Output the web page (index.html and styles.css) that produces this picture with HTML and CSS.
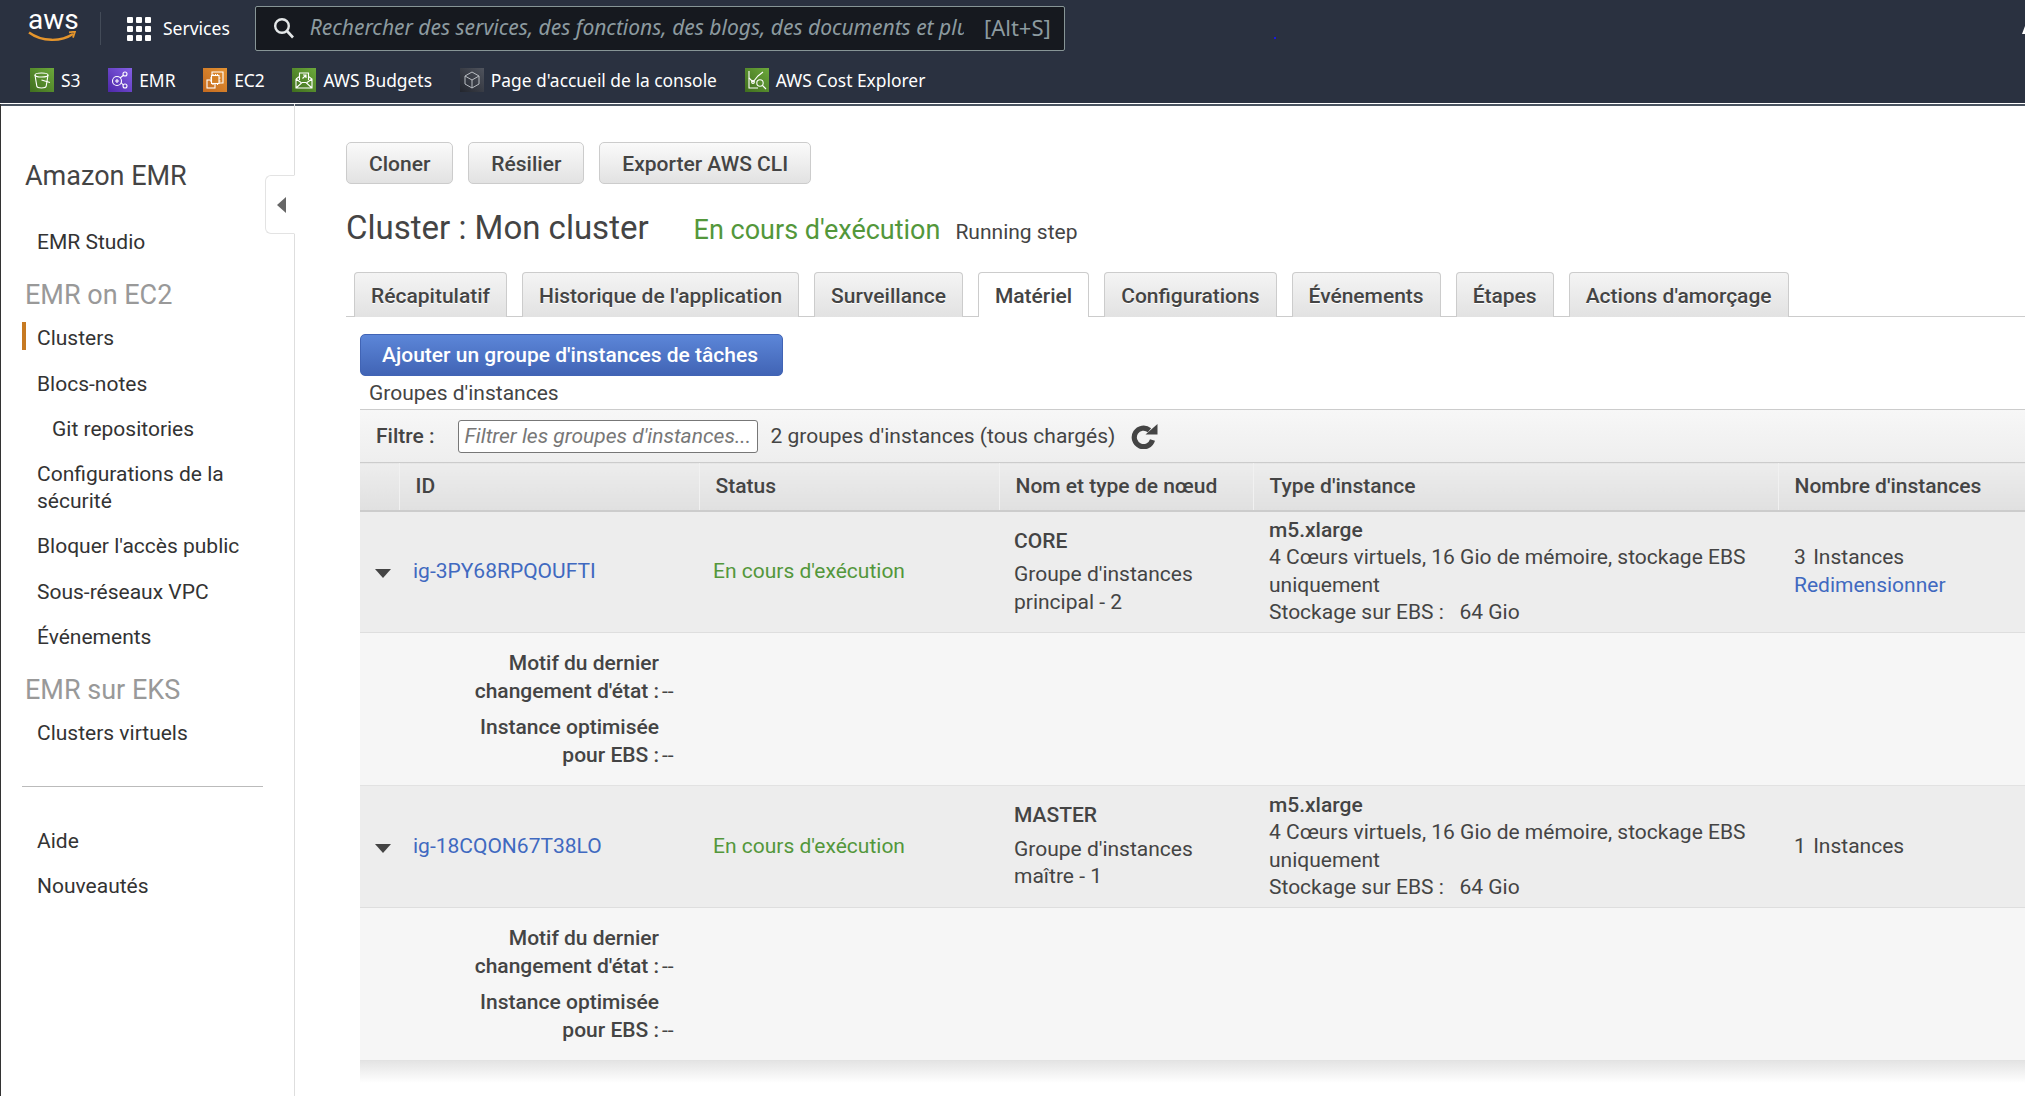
FILE: index.html
```html
<!DOCTYPE html>
<html lang="fr">
<head>
    <meta charset="utf-8">
    <title>Amazon EMR</title>
    <link rel="stylesheet" href="styles.css">
</head>
<body>

<header class="topbar">
    <div class="topbar_row">
        <a class="logo">
            <span class="logo_text">aws</span>
            <svg width="48" height="12" viewBox="0 0 48 12">
                <path d="M1 1.5C14 11 33 11 45 3" fill="none" stroke="#e5952c" stroke-width="2.4"/>
                <path d="M41 1.4L47 .6 45 6.6" fill="none" stroke="#e5952c" stroke-width="1.8"/>
            </svg>
        </a>
        <span class="logo_sep"></span>
        <span class="grid_icon">
            <i></i><i></i><i></i><i></i><i></i><i></i><i></i><i></i><i></i>
        </span>
        <span class="services">Services</span>
        <div class="searchbox">
            <svg width="22" height="22" viewBox="0 0 22 22">
                <circle cx="9" cy="9" r="6.8" fill="none" stroke="#e4e7e8" stroke-width="2.4"/>
                <path d="M14 14L20 20.5" stroke="#e4e7e8" stroke-width="2.6"/>
            </svg>
            <span class="searchbox_text">Rechercher des services, des fonctions, des blogs, des documents et plus</span>
            <span class="searchbox_key">[Alt+S]</span>
        </div>
    </div>
    <div class="favs">
        <a class="fav">
            <span class="fav_icon fav_green">
                <svg width="24" height="24" viewBox="0 0 24 24"><g fill="none" stroke="#fff" stroke-width="1.1"><ellipse cx="11.5" cy="7" rx="6.5" ry="2"/><path d="M5 7L6.8 18.2C7 19.5 9 20 11.5 20S16 19.5 16.2 18.2L18 7"/><path d="M11.5 12L20 14.5"/></g></svg>
            </span>S3</a>
        <a class="fav">
            <span class="fav_icon fav_purple">
                <svg width="24" height="24" viewBox="0 0 24 24"><g fill="none" stroke="#fff" stroke-width="1.1"><circle cx="9" cy="13" r="4.5"/><circle cx="17" cy="6" r="2"/><circle cx="17" cy="18" r="2"/><path d="M12 10L15.5 7.3M13 14.5L15.3 17M7 13H11M9 11V15"/></g></svg>
            </span>EMR</a>
        <a class="fav">
            <span class="fav_icon fav_orange">
                <svg width="24" height="24" viewBox="0 0 24 24"><g fill="none" stroke="#fff" stroke-width="1.1"><path d="M9 8V4H20V15H16"/><rect x="4" y="12" width="8" height="8"/><rect x="8.5" y="7.5" width="7.5" height="8" fill="#d27f26"/><path d="M10 6V7.5M12.5 6V7.5M14.5 6V7.5M10 15.5V17M14.5 15.5V17M7 10H8.5M7 13H8.5M16 10H17.5M16 13H17.5"/></g></svg>
            </span>EC2</a>
        <a class="fav">
            <span class="fav_icon fav_green">
                <svg width="24" height="24" viewBox="0 0 24 24"><g fill="none" stroke="#fff" stroke-width="1.1"><path d="M4 11V20H20V11L16.5 8.5M7.5 8.5L4 11M4 20L10 14.5H14L20 20M4 11L9 14.5M20 11L15 14.5"/><path d="M7.5 12V5H16.5V12M10.5 10.5L14 7M11 7H14V10"/></g></svg>
            </span>AWS Budgets</a>
        <a class="fav">
            <span class="fav_icon fav_grey">
                <svg width="24" height="24" viewBox="0 0 24 24"><g fill="none" stroke="#b9bdc2" stroke-width="1"><path d="M12 4L19 8V16L12 20L5 16V8Z"/><path d="M5 8L12 12L19 8M12 12V20"/></g></svg>
            </span>Page d'accueil de la console</a>
        <a class="fav">
            <span class="fav_icon fav_green">
                <svg width="24" height="24" viewBox="0 0 24 24"><g fill="none" stroke="#fff" stroke-width="1.1"><path d="M4 3V20H13"/><path d="M4 10L8 14L13 8L18 4"/><circle cx="8" cy="14" r="1.4"/><circle cx="15" cy="15" r="3.2"/><path d="M17.5 17.5L21 21"/></g></svg>
            </span>AWS Cost Explorer</a>
    </div>
    <span class="stray_dot"></span>
    <span class="corner_mark"></span>
</header>

<div class="page">

    <nav class="sidebar">
        <h2 class="side_title">Amazon EMR</h2>
        <a class="side_item">EMR Studio</a>
        <h3 class="side_group">EMR on EC2</h3>
        <a class="side_item side_active">Clusters</a>
        <a class="side_item">Blocs-notes</a>
        <a class="side_item side_sub">Git repositories</a>
        <a class="side_item">Configurations de la sécurité</a>
        <a class="side_item">Bloquer l'accès public</a>
        <a class="side_item">Sous-réseaux VPC</a>
        <a class="side_item">Événements</a>
        <h3 class="side_group">EMR sur EKS</h3>
        <a class="side_item">Clusters virtuels</a>
        <hr class="side_sep">
        <a class="side_item">Aide</a>
        <a class="side_item">Nouveautés</a>
        <span class="side_toggle"></span>
    </nav>

    <main class="content">
        <div class="actions">
            <button class="btn">Cloner</button>
            <button class="btn">Résilier</button>
            <button class="btn">Exporter AWS CLI</button>
        </div>

        <div class="cluster_head">
            <h1>Cluster : Mon cluster</h1>
            <span class="cluster_status">En cours d'exécution</span>
            <span class="cluster_step">Running step</span>
        </div>

        <div class="tabs">
            <a class="tab">Récapitulatif</a>
            <a class="tab">Historique de l'application</a>
            <a class="tab">Surveillance</a>
            <a class="tab tab_on">Matériel</a>
            <a class="tab">Configurations</a>
            <a class="tab">Événements</a>
            <a class="tab">Étapes</a>
            <a class="tab">Actions d'amorçage</a>
        </div>

        <div class="panel">
            <button class="btn_primary">Ajouter un groupe d'instances de tâches</button>
            <div class="panel_title">Groupes d'instances</div>

            <div class="filter">
                <b>Filtre :</b>
                <span class="filter_input">Filtrer les groupes d'instances...</span>
                <span>2 groupes d'instances (tous chargés)</span>
                <svg class="refresh" width="27" height="26" viewBox="0 0 27 26">
                    <path d="M18.5 7.2A9.3 9.3 0 1 0 21.5 17" fill="none" stroke="#444" stroke-width="5.2"/>
                    <path d="M26.5 1V11.5H14.5Z" fill="#444"/>
                </svg>
            </div>

            <table class="groups">
                <colgroup>
                    <col class="c_arrow"><col class="c_id"><col class="c_status"><col class="c_node"><col class="c_type"><col>
                </colgroup>
                <thead>
                    <tr>
                        <th></th>
                        <th>ID</th>
                        <th>Status</th>
                        <th>Nom et type de nœud</th>
                        <th>Type d'instance</th>
                        <th>Nombre d'instances</th>
                    </tr>
                </thead>
                <tbody>
                    <tr class="row">
                        <td><span class="arrow"></span></td>
                        <td><a class="link">ig-3PY68RPQOUFTI</a></td>
                        <td class="green">En cours d'exécution</td>
                        <td><b class="node">CORE</b>Groupe d'instances principal - 2</td>
                        <td><b>m5.xlarge</b><br>4 Cœurs virtuels, 16 Gio de mémoire, stockage EBS uniquement<br>Stockage sur EBS :&nbsp;&nbsp; 64 Gio</td>
                        <td>3&nbsp;&#8202;Instances<br><a class="link">Redimensionner</a></td>
                    </tr>
                    <tr class="detail">
                        <td colspan="6">
                            <div class="field"><b>Motif du dernier changement d'état :</b><span>--</span></div>
                            <div class="field"><b>Instance optimisée pour EBS :</b><span>--</span></div>
                        </td>
                    </tr>
                    <tr class="row">
                        <td><span class="arrow"></span></td>
                        <td><a class="link">ig-18CQON67T38LO</a></td>
                        <td class="green">En cours d'exécution</td>
                        <td><b class="node">MASTER</b>Groupe d'instances maître - 1</td>
                        <td><b>m5.xlarge</b><br>4 Cœurs virtuels, 16 Gio de mémoire, stockage EBS uniquement<br>Stockage sur EBS :&nbsp;&nbsp; 64 Gio</td>
                        <td>1&nbsp;&#8202;Instances</td>
                    </tr>
                    <tr class="detail">
                        <td colspan="6">
                            <div class="field"><b>Motif du dernier changement d'état :</b><span>--</span></div>
                            <div class="field"><b>Instance optimisée pour EBS :</b><span>--</span></div>
                        </td>
                    </tr>
                </tbody>
            </table>
            <div class="table_shadow"></div>
        </div>
    </main>
</div>

</body>
</html>
```

FILE: styles.css
```css
* {
    box-sizing: border-box;
}

html, body {
    margin: 0;
    height: 100%;
    overflow: hidden;
    background: #fff;
}

body {
    font-family: Roboto, "Liberation Sans", sans-serif;
    font-size: 21px;
    line-height: 27px;
    color: #444;
}

/* top bar */
.topbar {
    position: relative;
    height: 103px;
    background: #2a3140;
    font-family: "Noto Sans", sans-serif;
    color: #fff;
}

.corner_mark {
    position: absolute;
    right: 0;
    top: 26px;
    border-bottom: 8px solid #fff;
    border-left: 3px solid transparent;
}

.stray_dot {
    position: absolute;
    left: 1274px;
    top: 37px;
    width: 2px;
    height: 2px;
    background: #1a1ae0;
}

.topbar_row {
    display: flex;
    align-items: center;
    height: 57px;
    padding-left: 28px;
}

.logo {
    display: flex;
    flex-direction: column;
    width: 48px;
    margin-top: -6px;
}

.logo_text {
    display: block;
    height: 22px;
    padding-right: 2px;
    font-family: Roboto, sans-serif;
    font-size: 28px;
    line-height: 22px;
    text-align: center;
}

.logo svg {
    display: block;
}

.logo_sep {
    width: 1px;
    height: 33px;
    margin-left: 24px;
    background: #434b58;
}

.grid_icon {
    display: grid;
    grid-template-columns: repeat(3, 6px);
    grid-auto-rows: 6px;
    gap: 3px;
    margin-left: 26px;
}

.grid_icon i {
    background: #fff;
    border-radius: 1px;
}

.services {
    margin-left: 12px;
    font-size: 17.5px;
}

.searchbox {
    display: flex;
    align-items: center;
    width: 810px;
    height: 45px;
    margin-left: 25px;
    padding: 0 13px 2px 17px;
    background: #16191f;
    border: 1px solid #879596;
    border-radius: 2px;
    color: #8d9ba0;
}

.searchbox_text {
    flex: 1;
    margin-left: 15px;
    overflow: hidden;
    white-space: nowrap;
    font-style: italic;
    font-size: 21px;
}

.searchbox_key {
    margin-left: 20px;
    font-size: 22px;
}

.favs {
    display: flex;
    align-items: center;
    height: 24px;
    margin-top: 11px;
    padding-left: 30px;
    gap: 27.7px;
    font-size: 17.4px;
    white-space: nowrap;
}

.fav {
    display: flex;
    align-items: center;
    gap: 7px;
}

.fav_icon {
    display: block;
    width: 24px;
    height: 24px;
}

.fav_green {
    background: linear-gradient(45deg, #3f6e1e, #6ca83b);
}

.fav_purple {
    background: linear-gradient(45deg, #4d27a8, #8560e6);
}

.fav_orange {
    background: linear-gradient(45deg, #c46a20, #e39232);
}

.fav_grey {
    background: linear-gradient(45deg, #22252d, #50545e);
}

/* layout */
.page {
    display: flex;
    height: 993px;
    background: #fff;
    border-top: 1px solid #fff;
}

.page::before {
    content: "";
    position: absolute;
    left: 0;
    right: 0;
    top: 104px;
    height: 2px;
    background: #4a5461;
}

.sidebar {
    position: relative;
    flex: none;
    width: 295px;
    padding: 45px 31px 0 0;
    border-left: 1px solid #333;
    border-right: 1px solid #dedede;
}

.side_title {
    margin: 0 0 17px 24px;
    font-size: 27px;
    font-weight: 400;
    line-height: 54px;
    color: #444;
}

.side_group {
    margin: 9px 0 0 24px;
    font-size: 27px;
    font-weight: 400;
    line-height: 42px;
    color: #999;
}

.side_item {
    display: block;
    padding: 9px 0 9.3px 36px;
    line-height: 27px;
    color: #333;
}

.side_sub {
    padding-left: 51px;
}

.side_active {
    position: relative;
}

.side_active::before {
    content: "";
    position: absolute;
    left: 21px;
    top: 6px;
    width: 4px;
    height: 28px;
    background: #c77a22;
}

.side_sep {
    height: 1px;
    margin: 29px 0 32px 21px;
    border: 0;
    background: #bbb;
}

.side_toggle {
    position: absolute;
    right: -1px;
    top: 71px;
    width: 30px;
    height: 59px;
    background: #fff;
    border: 1px solid #e3e3e3;
    border-right: 1px solid #fff;
    border-radius: 6px 0 0 6px;
}

.side_toggle::after {
    content: "";
    position: absolute;
    left: 11px;
    top: 21px;
    border: 8px solid transparent;
    border-left: 0;
    border-right: 9px solid #666;
}

.content {
    flex: 1;
    min-width: 0;
    padding: 38px 0 0 51px;
}

/* buttons */
.actions {
    display: flex;
    gap: 15px;
}

.btn {
    height: 42px;
    padding: 2px 22px 0;
    font: 500 21px Roboto, sans-serif;
    color: #444;
    background: linear-gradient(#fafafa, #e2e2e2);
    border: 1px solid #ccc;
    border-radius: 5px;
}

.cluster_head {
    display: flex;
    align-items: baseline;
    margin-top: 20px;
    height: 48px;
}

.cluster_head h1 {
    margin: 0;
    font-size: 33px;
    font-weight: 400;
    line-height: 48px;
}

.cluster_status {
    margin-left: 45px;
    font-size: 27px;
    color: #53973b;
}

.cluster_step {
    margin-left: 15px;
}

/* tabs */
.tabs {
    display: flex;
    gap: 15px;
    height: 45px;
    margin-top: 20px;
    padding-left: 8px;
    border-bottom: 1px solid #ccc;
}

.tab {
    height: 45px;
    padding: 1px 16px 0;
    font-weight: 500;
    line-height: 45px;
    background: linear-gradient(#f4f4f4, #e2e2e2);
    border: 1px solid #ccc;
    border-bottom: 0;
    border-radius: 4px 4px 0 0;
    text-shadow: 0 1px 0 #fff;
}

.tab_on {
    background: #fff;
}

/* panel */
.panel {
    margin-top: 17px;
    margin-left: 14px;
}

.btn_primary {
    display: block;
    width: 423px;
    height: 42px;
    padding: 0 3px 0 0;
    font: 500 21px Roboto, sans-serif;
    color: #fff;
    background: linear-gradient(#5c86d8, #4164b5);
    border: 1px solid #4164b5;
    border-radius: 5px;
}

.panel_title {
    height: 33px;
    padding: 4px 0 0 9px;
}

.filter {
    display: flex;
    align-items: center;
    height: 53px;
    padding-left: 16px;
    background: linear-gradient(#f7f7f7, #eee);
    border-top: 1px solid #ccc;
    white-space: nowrap;
}

.filter b {
    font-weight: 500;
}

.filter_input {
    width: 300px;
    height: 33px;
    margin: 0 13px 0 23px;
    padding-left: 6px;
    line-height: 30px;
    font-style: italic;
    color: #777;
    background: #fff;
    border: 1px solid #777;
    border-radius: 3px;
    overflow: hidden;
}

.refresh {
    margin-left: 16px;
}

/* table */
.groups {
    width: 100%;
    table-layout: fixed;
    border-collapse: collapse;
}

.c_arrow { width: 39px; }
.c_id { width: 300px; }
.c_status { width: 300px; }
.c_node { width: 254px; }
.c_type { width: 525px; }

.groups th {
    height: 48px;
    padding: 0 0 0 16px;
    text-align: left;
    font-weight: 500;
    background: linear-gradient(#ededed, #e0e0e0);
    border-top: 1px solid #ccc;
    border-bottom: 2px solid #ccc;
    border-left: 1px solid #f1f1f1;
}

.groups th:first-child {
    border-left: 0;
}

.row td {
    height: 122px;
    padding: 4px 20px 4px 16px;
    line-height: 27.5px;
    background: #ededed;
    border-bottom: 1px solid #dedede;
}

.row td:nth-child(2), .row td:nth-child(3) {
    padding-left: 14px;
}

.row td:nth-child(4) {
    padding-left: 15px;
}

.row td:first-child {
    padding: 0 0 0 15px;
}

.arrow {
    display: block;
    margin-top: 4px;
    width: 0;
    border: 8px solid transparent;
    border-bottom: 0;
    border-top: 9px solid #444;
}

.link {
    color: #4069c0;
}

.green {
    color: #53973b;
}

.node {
    display: block;
    margin-bottom: 6px;
    font-weight: 500;
}

.row b {
    font-weight: 500;
}

.detail td {
    height: 153px;
    padding: 17px 0 0;
    background: #f6f6f6;
    border-bottom: 1px solid #e2e2e2;
    vertical-align: top;
}

.field {
    display: flex;
    align-items: flex-end;
    margin-bottom: 9px;
    line-height: 27.5px;
}

.field b {
    width: 200px;
    margin-left: 99px;
    font-weight: 500;
    text-align: right;
}

.field span {
    margin-left: 3px;
}

.table_shadow {
    height: 22px;
    background: linear-gradient(#e4e4e4, #fff);
}
```
